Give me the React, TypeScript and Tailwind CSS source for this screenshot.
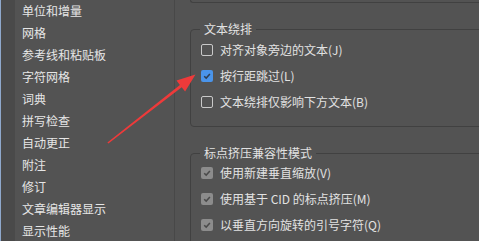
import React from "react";

const font = { fontFamily: '"Noto Sans CJK SC", "Noto Sans", sans-serif' };

const leftItems = [
  "单位和增量",
  "网格",
  "参考线和粘贴板",
  "字符网格",
  "词典",
  "拼写检查",
  "自动更正",
  "附注",
  "修订",
  "文章编辑器显示",
  "显示性能",
];

type Kind = "off" | "on" | "disabled";

function Box({ kind }: { kind: Kind }) {
  if (kind === "off") {
    return <span className="w-[12px] h-[12px] rounded-[2px] border border-[#c9c9c9] shrink-0" />;
  }
  const bg = kind === "on" ? "bg-[#4a94ea]" : "bg-[#8c8c8c]";
  const stroke = kind === "on" ? "#2e3e52" : "#4a4a4a";
  return (
    <span className={`w-[12px] h-[12px] rounded-[2px] ${bg} shrink-0 flex items-center justify-center`}>
      <svg width="10" height="10" viewBox="0 0 10 10">
        <path d="M2.2 5.2 L4.2 7.1 L7.9 3" fill="none" stroke={stroke} strokeWidth="1.5" />
      </svg>
    </span>
  );
}

function Row({ kind, label }: { kind: Kind; label: string }) {
  return (
    <div className="h-[26px] flex items-center pl-[10px]">
      <Box kind={kind} />
      <span className="ml-[7px] text-[12px] leading-[16px] text-[#e2e2e2] whitespace-nowrap">{label}</span>
    </div>
  );
}

function Group({ title, children, className }: { title: string; children: React.ReactNode; className?: string }) {
  return (
    <div className={`relative shrink-0 border border-[#414141] rounded-[4px] ${className ?? ""}`}>
      <span className="absolute left-[9px] top-[-9px] px-[4px] bg-[#535353] text-[12px] leading-[16px] text-[#e2e2e2] whitespace-nowrap">
        {title}
      </span>
      {children}
    </div>
  );
}

export default function App() {
  return (
    <div className="relative w-[479px] h-[241px] overflow-hidden bg-[#535353] flex" style={font}>
      <div className="w-[15px] h-full border-l border-[#8fa8cc] bg-[#4a4a4a] shrink-0" />
      <div className="w-[160px] h-full border-r border-[#484848] shrink-0 pl-[7px]">
        {leftItems.map((t) => (
          <div key={t} className="h-[22px] flex items-center text-[12px] leading-[16px] text-[#e6e6e6] whitespace-nowrap">
            {t}
          </div>
        ))}
      </div>
      <div className="flex-1 pl-[15px] flex flex-col">
        <div className="h-[3px] shrink-0 border-l border-b border-[#414141] rounded-bl-[4px] mr-[-10px]" />
        <Group title="文本绕排" className="mt-[26px] h-[98px] pt-[7px] mr-[-10px]">
          <Row kind="off" label="对齐对象旁边的文本(J)" />
          <Row kind="on" label="按行距跳过(L)" />
          <Row kind="off" label="文本绕排仅影响下方文本(B)" />
        </Group>
        <Group title="标点挤压兼容性模式" className="mt-[26px] h-[120px] pt-[6px] mr-[-10px]">
          <Row kind="disabled" label="使用新建垂直缩放(V)" />
          <Row kind="disabled" label="使用基于 CID 的标点挤压(M)" />
          <Row kind="disabled" label="以垂直方向旋转的引号字符(Q)" />
        </Group>
      </div>
      <svg className="absolute left-0 top-0 pointer-events-none" width="479" height="241" viewBox="0 0 479 241">
        <polygon
          points="107.4,142.6 179.9,84.9 176.5,80.6 195.5,74.5 185.1,91.6 181.7,87.3 108.4,143.6"
          fill="#ee3a3a"
        />
      </svg>
    </div>
  );
}
